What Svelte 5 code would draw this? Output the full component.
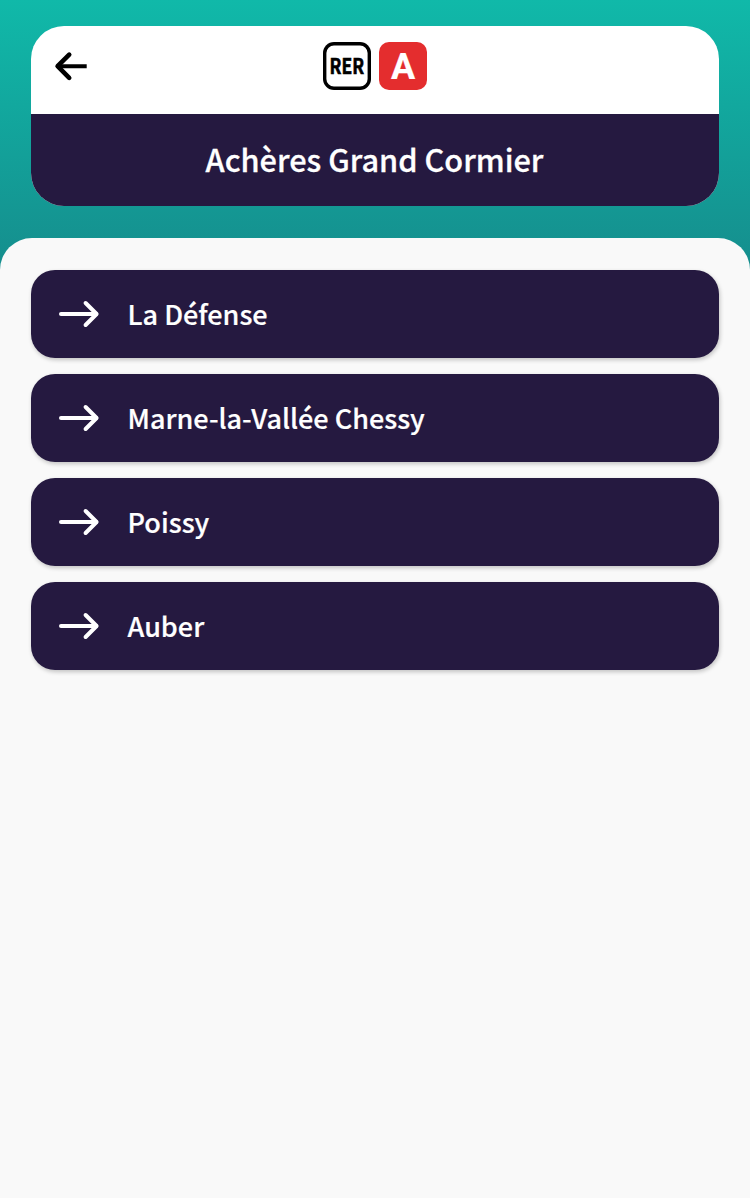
<script>
  const directions = ['La Défense', 'Marne-la-Vallée Chessy', 'Poissy', 'Auber'];
</script>

<main class="screen">
  <header class="card">
    <div class="topbar">
      <button class="back" aria-label="Retour">
        <svg width="34" height="32" viewBox="0 0 34 32" fill="none" stroke="#000">
          <path d="M32.7 16.2H5" stroke-width="4" />
          <path d="M15.2 4.6 3.6 16.2 15.2 27.8" stroke-width="4.6" stroke-linecap="round" stroke-linejoin="round" />
        </svg>
      </button>
      <div class="line">
        <span class="rer"><span class="rer-text">RER</span></span>
        <span class="letter">A</span>
      </div>
    </div>
    <h1>Achères Grand Cormier</h1>
  </header>

  <section class="panel">
    {#each directions as name}
      <button class="row">
        <svg width="42" height="30" viewBox="0 0 42 30" fill="none" stroke="#fff" stroke-width="4" stroke-linecap="round" stroke-linejoin="round">
          <path d="M3 15H38" />
          <path d="M27.6 4 38.6 15 27.6 26" />
        </svg>
        <span>{name}</span>
      </button>
    {/each}
  </section>
</main>

<style>
  :global(body) { margin: 0; }
  .screen {
    box-sizing: border-box;
    height: 1198px;
    padding-top: 26px;
    display: flex;
    flex-direction: column;
    background: linear-gradient(180deg, #10b9a9 0, #158f8e 260px);
    font-family: "Noto Sans CJK JP", "Noto Sans", sans-serif;
    font-weight: 500;
    overflow: hidden;
  }
  .card {
    margin: 0 31px;
    width: 688px;
    height: 179.6px;
    flex: none;
    border-radius: 33px;
    overflow: hidden;
    background: #fff;
  }
  .topbar {
    height: 88px;
    display: grid;
    grid-template-columns: 1fr auto 1fr;
    align-items: center;
    padding: 0 23px;
    box-sizing: border-box;
  }
  button {
    border: 0;
    background: none;
    margin: 0;
    padding: 0;
    font: inherit;
  }
  .back { justify-self: start; height: 32px; margin-bottom: 8px; }
  .line {
    grid-column: 2;
    display: flex;
    gap: 8px;
    margin-bottom: 8px;
  }
  .rer, .letter {
    box-sizing: border-box;
    width: 48px;
    height: 48px;
    border-radius: 10px;
    display: flex;
    align-items: center;
    justify-content: center;
    font-weight: 700;
  }
  .rer {
    box-shadow: inset 0 0 0 3.4px #000;
    border-radius: 11px;
    color: #000;
    font-size: 21px;
    padding-bottom: 2px;
  }
  .rer-text {
    transform: scaleX(0.83);
    line-height: 1;
    -webkit-text-stroke: 0.6px #000;
  }
  .letter {
    background: #e42d2e;
    color: #fff;
    font: 700 36px/1 Roboto, sans-serif;
    padding-top: 2px;
    -webkit-text-stroke: 0.2px #fff;
  }
  h1 {
    margin: 0;
    height: 92px;
    background: #251940;
    color: #fff;
    font-size: 30.7px;
    font-weight: 500;
    line-height: 90px;
    text-align: center;
    padding-right: 1px;
    -webkit-text-stroke: 0.3px #fff;
  }
  .panel {
    margin-top: 32px;
    flex: 1;
    box-sizing: border-box;
    padding: 32px 31px;
    border-radius: 32px 32px 0 0;
    background: #f9f9f9;
    display: flex;
    flex-direction: column;
    gap: 16.3px;
  }
  .row {
    height: 88px;
    flex: none;
    box-sizing: border-box;
    padding-left: 27px;
    display: flex;
    align-items: center;
    gap: 27.5px;
    border-radius: 24px;
    background: #251940;
    color: #fff;
    font-size: 27px;
    box-shadow: 1px 2px 4px rgba(0, 0, 0, 0.22);
  }
  .row span {
    padding-bottom: 1px;
    -webkit-text-stroke: 0.2px #fff;
  }
</style>
